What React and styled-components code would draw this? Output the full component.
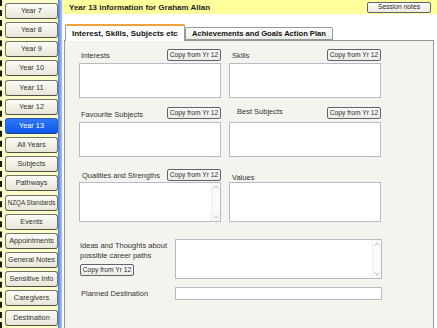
import React from "react";
import styled, { createGlobalStyle } from "styled-components";

const Global = createGlobalStyle`
  html, body { margin: 0; padding: 0; }
  body {
    width: 437px; height: 328px; overflow: hidden;
    font-family: "Liberation Sans", Arial, sans-serif;
    background: #ffffff;
  }
  * { box-sizing: border-box; }
`;

const Screen = styled.div`
  display: flex;
  width: 437px;
  height: 328px;
  overflow: hidden;
`;

const Sidebar = styled.nav`
  width: 58px;
  flex: none;
  background: #fdfdc8;
  border-left: 2px dashed #1a1a10;
  padding: 3px 0 0 3px;
  display: flex;
  flex-direction: column;
  gap: 3.17px;
`;

const Rail = styled.div`
  width: 5px;
  flex: none;
  background: linear-gradient(to right, #4d7cd0 0, #7fa6e6 2px, #a9c5f1 4px, #eef3fb 4px);
`;

const NavButton = styled.button`
  width: 53px;
  height: 16px;
  padding: 0;
  border-radius: 3px;
  border: 1px solid ${p => (p.$active ? "#2d58b8" : "#73736a")};
  border-bottom-color: ${p => (p.$active ? "#1c3f8c" : "#4f4f48")};
  background: ${p => (p.$active
    ? "linear-gradient(#2f78f8, #0f58ea)"
    : "linear-gradient(#fbfbf7, #e9e6d8)")};
  color: ${p => (p.$active ? "#ffffff" : "#333333")};
  font-family: "Liberation Sans", Arial, sans-serif;
  font-size: ${p => p.$size || 7.3}px;
  line-height: 14px;
  white-space: nowrap;
  text-align: center;
`;

const Main = styled.main`
  flex: 1;
  display: flex;
  flex-direction: column;
  background: #ffffff;
`;

const Header = styled.header`
  height: 14px;
  flex: none;
  background: #ffff9c;
  display: flex;
  align-items: center;
  justify-content: space-between;
  padding: 0 6px;
`;

const Title = styled.h1`
  margin: 0;
  font-size: 8px;
  font-weight: bold;
  color: #1e1e1e;
`;

const SmallButton = styled.button`
  width: ${p => p.$w || 54}px;
  height: ${p => p.$h || 12}px;
  padding: 0;
  border: 1px solid #5c6470;
  border-radius: 2px;
  background: linear-gradient(#fbfbf8, #ecebe4);
  color: #2a2a2a;
  font-family: "Liberation Sans", Arial, sans-serif;
  font-size: 6.7px;
  line-height: 1;
  white-space: nowrap;
`;

const TabStrip = styled.div`
  margin-top: 10px;
  height: 16px;
  flex: none;
  display: flex;
  align-items: flex-end;
  padding-left: 2px;
  position: relative;
  z-index: 1;
`;

const Tab = styled.div`
  height: ${p => (p.$active ? 17 : 13)}px;
  margin-bottom: ${p => (p.$active ? -1 : 0)}px;
  width: ${p => p.$w}px;
  border: 1px solid #919b9c;
  border-bottom: ${p => (p.$active ? "none" : "1px solid #919b9c")};
  border-top: ${p => (p.$active ? "2px solid #f0a23c" : "1px solid #919b9c")};
  border-radius: 2px 2px 0 0;
  background: ${p => (p.$active ? "#ffffff" : "linear-gradient(#ffffff, #ecebe5)")};
  font-size: ${p => p.$size || 8}px;
  font-weight: bold;
  color: #111;
  display: flex;
  align-items: center;
  padding-left: ${p => p.$pad || 6}px;
  white-space: nowrap;
  overflow: hidden;
`;

const Panel = styled.section`
  flex: 1;
  margin-left: 1px;
  width: 370px;
  border: 1px solid #919b9c;
  border-bottom: none;
  background: #f4f3ee;
  padding: 8px 0 0 14px;
`;

const PairRow = styled.div`
  display: grid;
  grid-template-columns: 142px 152px;
  column-gap: 8px;
  margin-top: ${p => p.$top || 0}px;
`;

const Field = styled.div`
  display: flex;
  flex-direction: column;
`;

const FieldHead = styled.div`
  height: 12px;
  display: flex;
  align-items: center;
  justify-content: space-between;
  margin-bottom: ${p => p.$gap || 2}px;
`;

const Label = styled.span`
  font-size: 7.5px;
  color: #333;
  padding-left: ${p => p.$inset || 2}px;
  position: relative;
  top: ${p => p.$shift || 0}px;
  white-space: nowrap;
`;

const Box = styled.div`
  height: ${p => p.$h}px;
  background: #ffffff;
  border: 1px solid #b4bcc6;
  display: flex;
  justify-content: flex-end;
`;

const Scroll = styled.div`
  width: 9px;
  display: flex;
  flex-direction: column;
  justify-content: space-between;
  align-items: center;
  background: #fbfbf9;
  border-left: 1px solid #eeeeea;
  padding: 2px 0;
`;

const WideRow = styled.div`
  display: grid;
  grid-template-columns: 96px 207px;
  margin-top: ${p => p.$top || 0}px;
  align-items: ${p => p.$align || "start"};
`;

const SideLabel = styled.div`
  display: flex;
  flex-direction: column;
  align-items: flex-start;
  padding-top: 2px;
  font-size: 7.5px;
  color: #333;
  line-height: 10px;
  padding-left: ${p => p.$inset || 1}px;
`;

const ButtonSlot = styled.div`
  margin-top: 3px;
`;

const Chevron = ({ up }) => (
  <svg width="6" height="4" viewBox="0 0 6 4">
    <path d={up ? "M0.5 3.5 L3 1 L5.5 3.5" : "M0.5 0.5 L3 3 L5.5 0.5"} fill="none" stroke="#b9bdc4" strokeWidth="1" />
  </svg>
);

const ScrollBar = () => (
  <Scroll>
    <Chevron up />
    <Chevron />
  </Scroll>
);

const navItems = [
  "Year 7", "Year 8", "Year 9", "Year 10", "Year 11", "Year 12", "Year 13",
  "All Years", "Subjects", "Pathways", "NZQA Standards", "Events",
  "Appointments", "General Notes", "Sensitive Info", "Caregivers", "Destination",
];

const Copy = () => <SmallButton>Copy from Yr 12</SmallButton>;

export default function App() {
  return (
    <>
      <Global />
      <Screen>
        <Sidebar>
          {navItems.map(n => (
            <NavButton key={n} $active={n === "Year 13"} $size={n === "NZQA Standards" ? 6.3 : undefined}>
              {n}
            </NavButton>
          ))}
        </Sidebar>
        <Rail />
        <Main>
          <Header>
            <Title>Year 13 information for Graham Allan</Title>
            <SmallButton $w={64} $h={11}>Session notes</SmallButton>
          </Header>
          <TabStrip>
            <Tab $active $w={120}>Interest, Skills, Subjects etc</Tab>
            <Tab $w={148} $size={7.6} $pad={6}>Achievements and Goals Action Plan</Tab>
          </TabStrip>
          <Panel>
            <PairRow>
              <Field>
                <FieldHead><Label>Interests</Label><Copy /></FieldHead>
                <Box $h={35} />
              </Field>
              <Field>
                <FieldHead><Label $inset={3}>Skills</Label><Copy /></FieldHead>
                <Box $h={35} />
              </Field>
            </PairRow>
            <PairRow $top={9}>
              <Field>
                <FieldHead $gap={3}><Label $shift={1}>Favourite Subjects</Label><Copy /></FieldHead>
                <Box $h={35} />
              </Field>
              <Field>
                <FieldHead $gap={3}><Label $inset={8} $shift={-2}>Best Subjects</Label><Copy /></FieldHead>
                <Box $h={35} />
              </Field>
            </PairRow>
            <PairRow $top={12}>
              <Field>
                <FieldHead $gap={1}><Label $inset={3}>Qualities and Strengths</Label><Copy /></FieldHead>
                <Box $h={40}><ScrollBar /></Box>
              </Field>
              <Field>
                <FieldHead $gap={1}><Label $inset={3} $shift={2}>Values</Label></FieldHead>
                <Box $h={40} />
              </Field>
            </PairRow>
            <WideRow $top={17}>
              <SideLabel>
                <span>Ideas and Thoughts about</span>
                <span>possible career paths</span>
                <ButtonSlot><Copy /></ButtonSlot>
              </SideLabel>
              <Box $h={40}><ScrollBar /></Box>
            </WideRow>
            <WideRow $top={8} $align="center">
              <Label>Planned Destination</Label>
              <Box $h={13} />
            </WideRow>
          </Panel>
        </Main>
      </Screen>
    </>
  );
}
